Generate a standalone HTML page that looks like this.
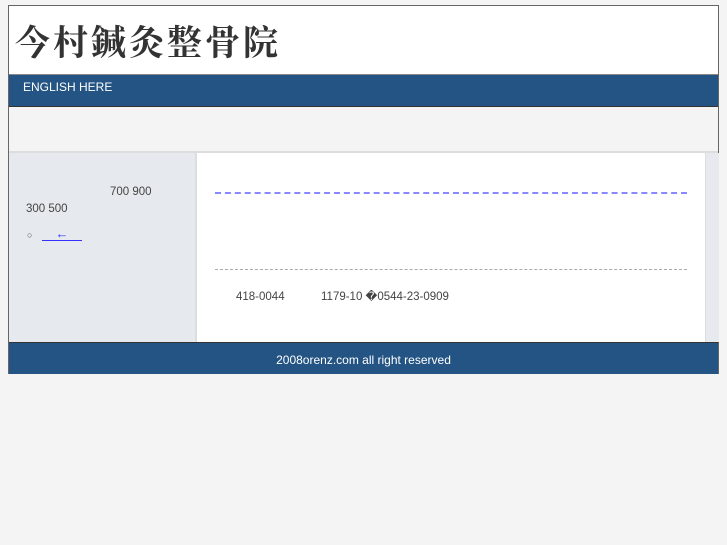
<!DOCTYPE html>
<html><head><meta charset="utf-8"><style>
html,body{margin:0;padding:0;background:#f4f4f4;width:727px;height:545px;overflow:hidden;font-family:"Liberation Sans",sans-serif;}
.wrap{position:absolute;left:8px;top:5px;width:709px;height:367px;border:1px solid #666;background:#fff;}
.hd{position:absolute;left:0;top:0;width:709px;height:68px;background:#fff;border-bottom:1px solid #888;}
.hd h1{margin:0;position:absolute;left:6px;top:15px;font:bold 35px/40px "Noto Serif CJK SC",serif;color:#333;letter-spacing:3px;}
.nav{position:absolute;left:0;top:69px;width:709px;height:31px;background:#245484;border-bottom:1px solid #333;}
.nav span{position:absolute;left:14px;top:5px;color:#fff;font-size:12px;}
.band{position:absolute;left:0;top:101px;width:709px;height:44px;background:#f4f4f4;border-bottom:2px solid #ddd;}
.left{position:absolute;left:0;top:147px;width:186px;height:189px;background:#e6eaee;border-right:2px solid #ddd;color:#444;font-size:12px;}
.right{position:absolute;left:696px;top:147px;width:13px;height:189px;background:#e6eaee;border-left:1px solid #ddd;}
.foot{position:absolute;left:0;top:336px;width:709px;height:31px;background:#245484;border-top:1px solid #333;color:#fff;font-size:12px;text-align:center;line-height:34px;}
.t{position:absolute;white-space:nowrap;font-size:11.5px;line-height:14px;height:14px;color:#444;}
</style></head><body>
<div class="wrap">
<div class="hd"><h1>今村鍼灸整骨院</h1></div>
<div class="nav"><span>ENGLISH HERE</span></div>
<div class="band"></div>
<div class="left">
<div class="t" style="left:101px;top:32px">700 900</div>
<div class="t" style="left:17px;top:49px">300 500</div>
<div class="t" style="left:18px;top:75px;font-size:9px">○</div>
<div style="position:absolute;left:33px;top:75px;width:40px;border-bottom:1px solid #33f;color:#33f;font-size:13px;font-weight:bold;line-height:12px;text-align:center">←</div>
</div>
<div style="position:absolute;left:206px;top:186px;width:472px;border-top:2px dashed #88f"></div>
<div style="position:absolute;left:206px;top:263px;width:472px;border-top:1px dashed #aaa"></div>
<div class="t" style="left:227px;top:284px">418-0044</div>
<div class="t" style="left:312px;top:284px;overflow:hidden">1179-10 �0544-23-0909</div>
<div class="right"></div>
<div class="foot">2008orenz.com all right reserved</div>
</div>
</body></html>
